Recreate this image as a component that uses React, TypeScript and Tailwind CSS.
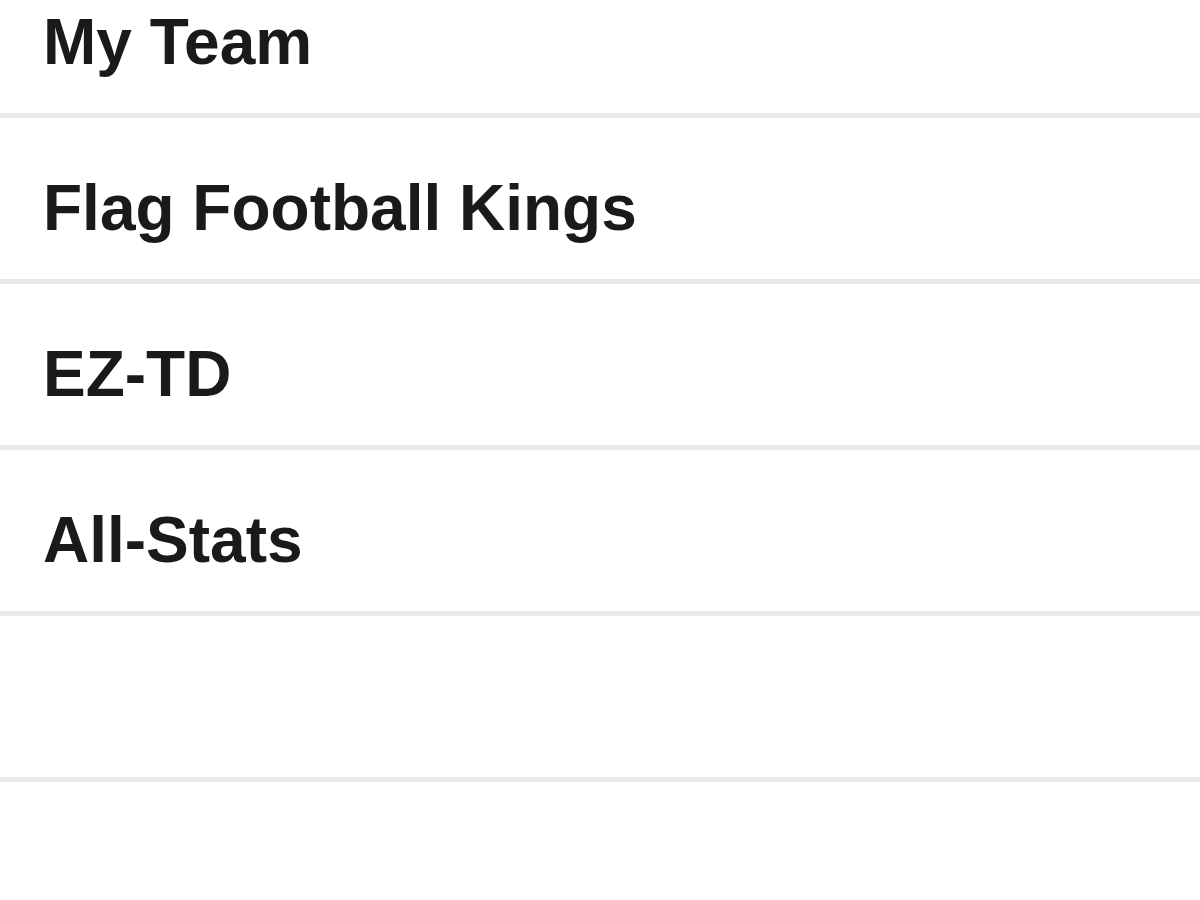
import React from 'react';

const teams = ['My Team', 'Flag Football Kings', 'EZ-TD', 'All-Stats', ''];

export default function App() {
  return (
    <div className="w-[1200px] h-[900px] overflow-hidden bg-white" style={{ fontFamily: '"Liberation Sans", Arial, sans-serif' }}>
      <ul className="mt-[-48px]">
        {teams.map((name, i) => (
          <li
            key={i}
            className="h-[166px] flex items-center pl-[43px] pt-[18px] border-b-[5px] border-[#e9e9e9] text-[64px] font-bold text-[#1a1a1a]"
          >
            {name}
          </li>
        ))}
      </ul>
    </div>
  );
}
